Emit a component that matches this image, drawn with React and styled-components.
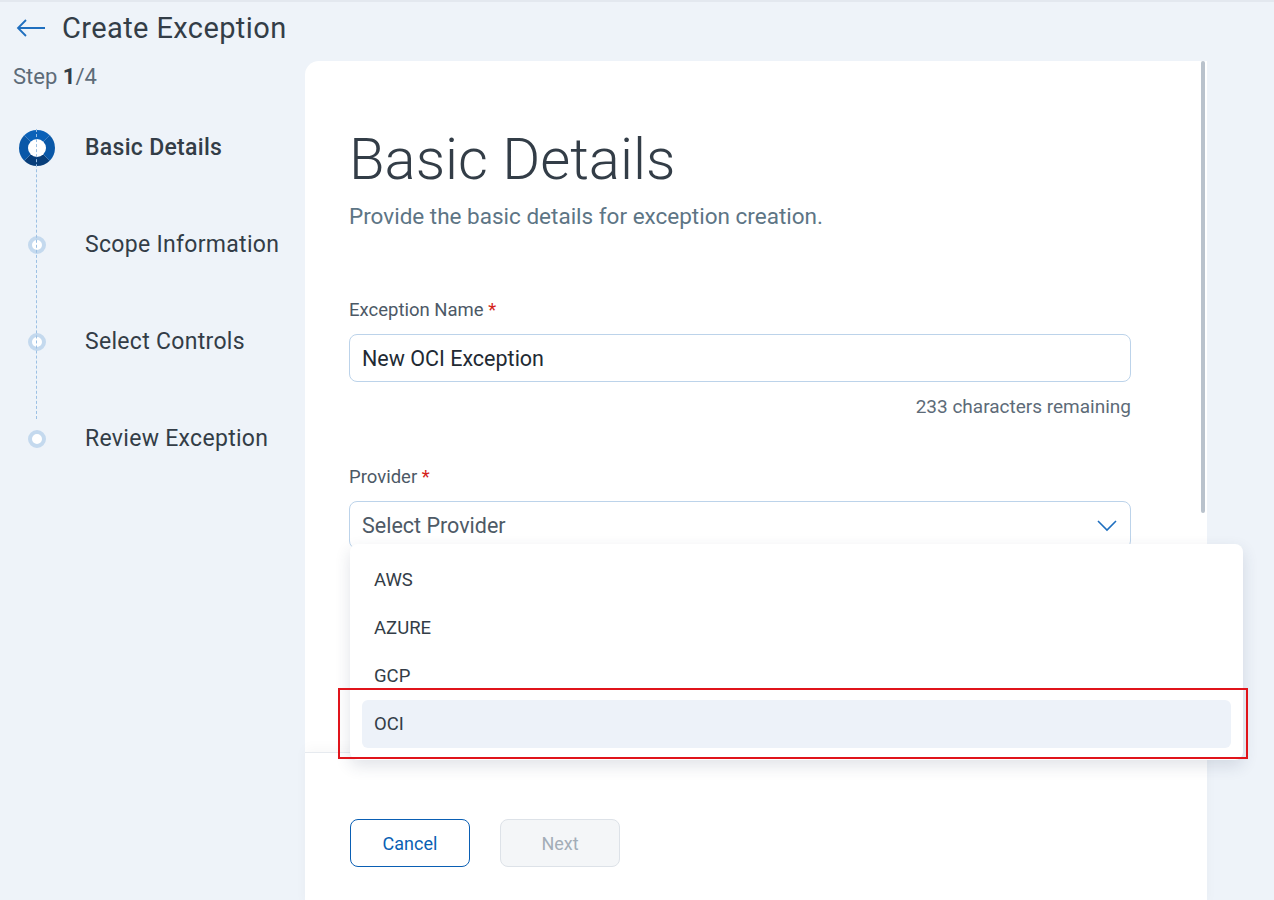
import React from 'react';
import styled, { createGlobalStyle } from 'styled-components';

const Global = createGlobalStyle`
  body { margin: 0; background: #eef3f9; font-family: Roboto, "Liberation Sans", sans-serif; color: #333d47; }
`;

const Page = styled.div`
  height: 900px;
  overflow: hidden;
  border-top: 2px solid #e3e8ef;
  box-sizing: border-box;
`;

const Header = styled.div`
  display: flex;
  align-items: center;
  gap: 16px;
  height: 52px;
  padding-left: 16px;
  font-size: 29px;
  letter-spacing: 0.4px;
  color: #333d47;
`;

const Body = styled.div`
  display: flex;
`;

const Sidebar = styled.div`
  width: 305px;
  flex-shrink: 0;
  padding-left: 13px;
  box-sizing: border-box;
`;

const StepCount = styled.div`
  font-size: 22px;
  color: #5d6b78;
  margin-top: 10px;
  b { color: #333d47; }
`;

const Steps = styled.div`
  margin-top: 28px;
  position: relative;
  &::before {
    content: '';
    position: absolute;
    left: 23px;
    top: 30px;
    height: 290px;
    border-left: 1px dashed #9cc0e4;
  }
`;

const Step = styled.div`
  display: flex;
  align-items: center;
  height: 97px;
  margin-top: ${p => (p.first ? '-18px' : '0')};
  font-size: 23px;
  letter-spacing: 0.3px;
  font-weight: ${p => (p.active ? 500 : 400)};
  color: #333d47;
`;

const Dot = styled.div`
  width: 48px;
  display: flex;
  justify-content: center;
  margin-right: 24px;
  span {
    display: block;
    box-sizing: border-box;
    width: ${p => (p.active ? '36px' : '18px')};
    height: ${p => (p.active ? '36px' : '18px')};
    border-radius: 50%;
    background: #fff;
    border: ${p => (p.active ? '9px solid #0a5fb4' : '4px solid #c4d9ee')};
    ${p => p.active && 'border-color: #0b61b8 #0a58a8 #083e7a #0a58a8;'}
  }
`;

const Card = styled.div`
  position: relative;
  width: 902px;
  height: 845px;
  margin-top: 7px;
  background: #fff;
  border-radius: 14px 0 0 0;
`;

const Scroll = styled.div`
  position: absolute;
  right: 2px;
  top: 0;
  width: 4px;
  height: 452px;
  border-radius: 2px;
  background: #b9c2cc;
`;

const Content = styled.div`
  padding: 62px 76px 0 44px;
`;

const Title = styled.h1`
  margin: 0;
  font-size: 58px;
  font-weight: 300;
  color: #333d47;
  line-height: 72px;
`;

const Sub = styled.p`
  margin: 8px 0 0;
  font-size: 22.5px;
  color: #5d7585;
`;

const Label = styled.div`
  margin-top: ${p => p.top}px;
  font-size: 18.5px;
  color: #4c5966;
  span { color: #d4231b; }
`;

const Input = styled.div`
  margin-top: 13px;
  height: 46px;
  border: 1px solid #bcd3ea;
  border-radius: 8px;
  display: flex;
  align-items: center;
  justify-content: space-between;
  padding: 0 12px;
  font-size: 21.5px;
  color: ${p => (p.placeholder ? '#4e5a66' : '#222a33')};
`;

const Hint = styled.div`
  text-align: right;
  margin-top: 13px;
  font-size: 19px;
  color: #5d6b78;
`;

const Footer = styled.div`
  position: absolute;
  left: 0;
  right: 0;
  top: 691px;
  bottom: 0;
  border-top: 1px solid #e6eaef;
  box-shadow: 0 -4px 12px rgba(0,0,0,0.03);
  display: flex;
  gap: 30px;
  padding: 66px 0 0 45px;
  box-sizing: border-box;
`;

const Button = styled.button`
  width: 120px;
  height: 48px;
  border-radius: 8px;
  font-family: inherit;
  font-size: 18px;
  background: ${p => (p.disabled ? '#f4f6f8' : '#fff')};
  color: ${p => (p.disabled ? '#a3adb7' : '#0a5fb4')};
  border: 1px solid ${p => (p.disabled ? '#dde2e8' : '#0a5fb4')};
`;

const Menu = styled.div`
  position: absolute;
  left: 45px;
  top: 483px;
  width: 893px;
  background: #fff;
  border-radius: 8px;
  box-shadow: 0 6px 16px rgba(40,60,90,0.14);
  padding: 12px;
  box-sizing: border-box;
`;

const Option = styled.div`
  height: 48px;
  display: flex;
  align-items: center;
  padding-left: 12px;
  border-radius: 6px;
  font-size: 18.5px;
  color: #333d47;
  background: ${p => (p.selected ? '#edf2f9' : 'transparent')};
`;

const Highlight = styled.div`
  position: absolute;
  left: 33px;
  top: 627px;
  width: 906px;
  height: 67px;
  border: 2px solid #e0141b;
`;

export default function App() {
  return (
    <Page>
      <Global />
      <Header>
        <svg width="30" height="20" viewBox="0 0 30 20" fill="none" stroke="#1f6fbf" strokeWidth="1.8">
          <path d="M29 10H2M10 2L2 10l8 8" />
        </svg>
        Create Exception
      </Header>
      <Body>
        <Sidebar>
          <StepCount>Step <b>1</b>/4</StepCount>
          <Steps>
            {['Basic Details', 'Scope Information', 'Select Controls', 'Review Exception'].map((s, i) => (
              <Step key={s} first={i === 0} active={i === 0}>
                <Dot active={i === 0}><span /></Dot>
                {s}
              </Step>
            ))}
          </Steps>
        </Sidebar>
        <Card>
          <Scroll />
          <Content>
            <Title>Basic Details</Title>
            <Sub>Provide the basic details for exception creation.</Sub>
            <Label top={70}>Exception Name <span>*</span></Label>
            <Input>New OCI Exception</Input>
            <Hint>233 characters remaining</Hint>
            <Label top={48}>Provider <span>*</span></Label>
            <Input placeholder="1">
              Select Provider
              <svg width="22" height="14" viewBox="0 0 22 14" fill="none" stroke="#1f6fbf" strokeWidth="1.6">
                <path d="M2 3l9 9 9-9" />
              </svg>
            </Input>
          </Content>
          <Footer>
            <Button>Cancel</Button>
            <Button disabled>Next</Button>
          </Footer>
          <Menu>
            {['AWS', 'AZURE', 'GCP', 'OCI'].map(o => (
              <Option key={o} selected={o === 'OCI'}>{o}</Option>
            ))}
          </Menu>
          <Highlight />
        </Card>
      </Body>
    </Page>
  );
}
